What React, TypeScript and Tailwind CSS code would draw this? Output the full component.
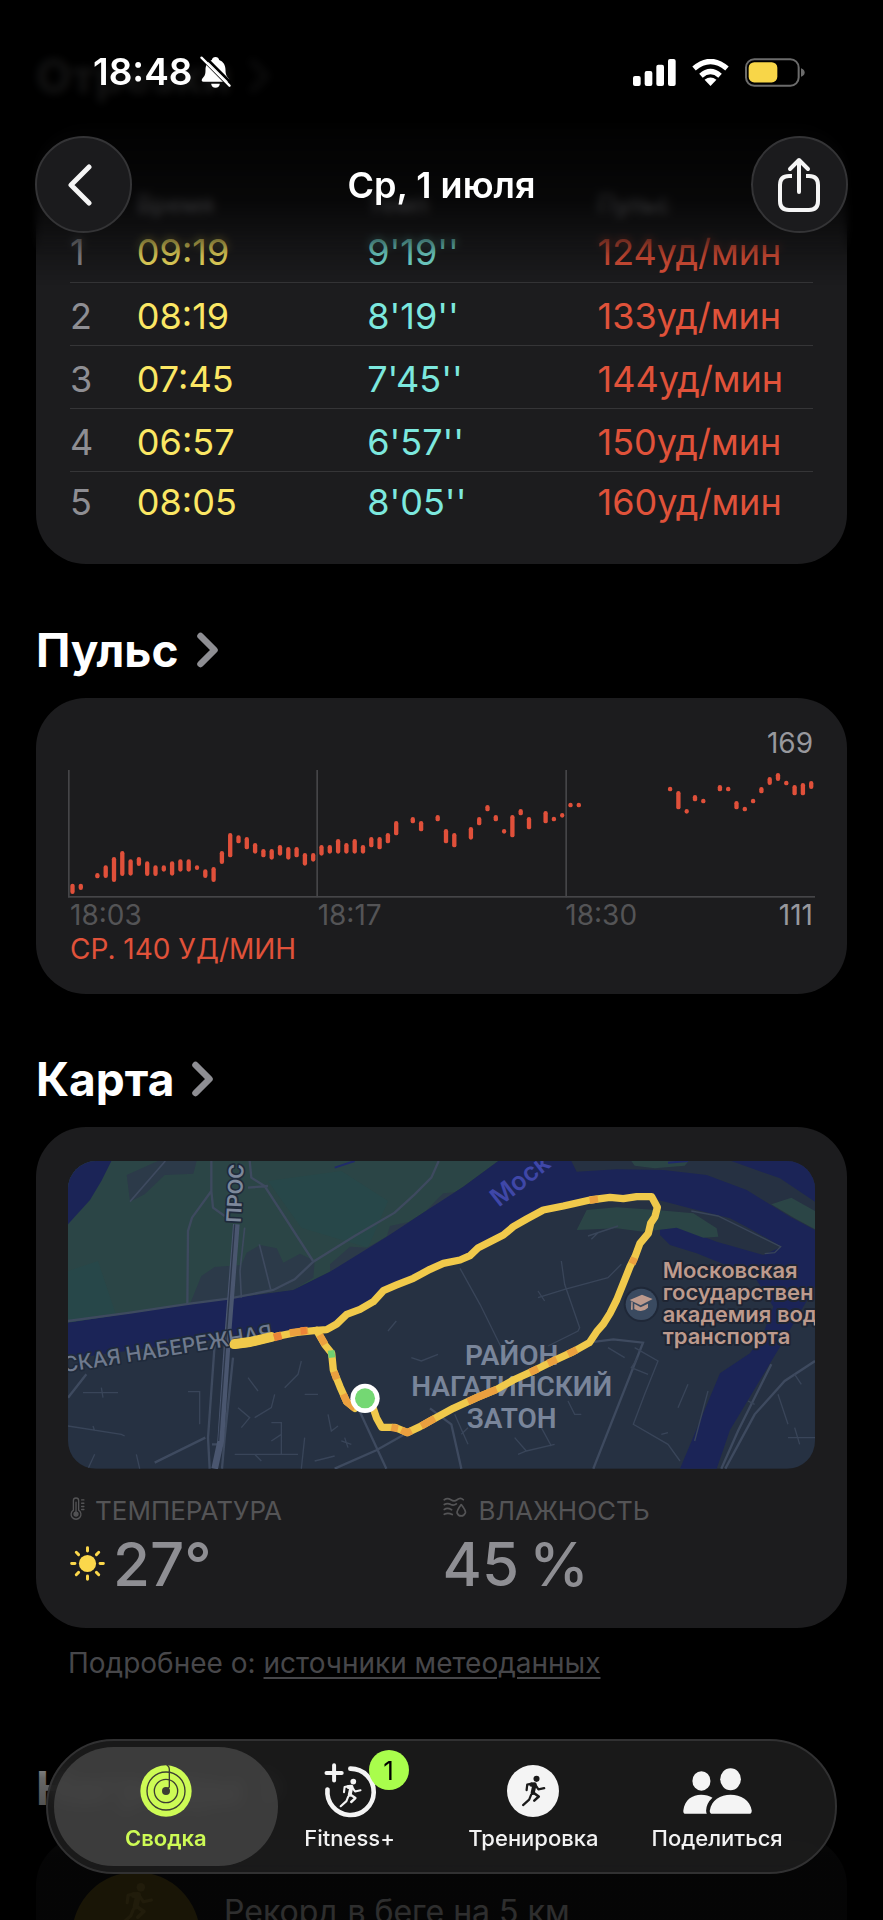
import type { ReactNode } from "react";

type Lap = { n: number; time: string; pace: string; pulse: string };

const laps: Lap[] = [
  { n: 1, time: "09:19", pace: "9'19''", pulse: "124уд/мин" },
  { n: 2, time: "08:19", pace: "8'19''", pulse: "133уд/мин" },
  { n: 3, time: "07:45", pace: "7'45''", pulse: "144уд/мин" },
  { n: 4, time: "06:57", pace: "6'57''", pulse: "150уд/мин" },
  { n: 5, time: "08:05", pace: "8'05''", pulse: "160уд/мин" },
];

// [slot, top, bottom] of every heart rate range on the chart grid
const ranges: [number, number, number][] = [
  [0, 341, 372], [1, 341, 360], [3, 309, 325], [4, 286, 324], [5, 261, 336], [6, 243, 318],
  [7, 268, 317], [8, 261, 288], [9, 274, 318], [10, 286, 318], [11, 286, 305], [12, 274, 317],
  [13, 268, 305], [14, 268, 305], [15, 286, 300], [16, 298, 324], [17, 291, 336], [18, 243, 282],
  [19, 189, 262], [20, 196, 220], [21, 201, 238], [22, 219, 251], [23, 237, 262], [24, 237, 269],
  [25, 225, 257], [26, 231, 269], [27, 231, 262], [28, 249, 287], [29, 249, 275], [30, 225, 257],
  [31, 225, 251], [32, 207, 251], [33, 219, 251], [34, 207, 251], [35, 225, 251], [36, 201, 232],
  [37, 201, 238], [38, 189, 220], [39, 153, 196], [41, 141, 160], [42, 153, 184], [44, 135, 154],
  [45, 177, 220], [46, 189, 232], [48, 171, 209], [49, 141, 166], [50, 105, 124], [51, 135, 154],
  [52, 177, 191], [53, 135, 202], [54, 117, 136], [55, 141, 178], [57, 123, 160], [58, 140, 154],
  [59, 129, 143], [60, 98, 112], [61, 98, 112], [72, 50, 64], [73, 63, 118], [74, 117, 131],
  [75, 75, 94], [76, 86, 100], [78, 45, 64], [79, 50, 64], [80, 93, 118], [81, 110, 124],
  [82, 86, 100], [83, 51, 70], [84, 21, 45], [85, 9, 33], [86, 32, 46], [87, 45, 76],
  [88, 39, 76], [89, 33, 57],
];

function Runner({ className }: { className?: string }) {
  return (
    <svg viewBox="0 0 80 100" className={className} fill="none" stroke="currentColor" strokeLinecap="round" strokeLinejoin="round" aria-hidden="true">
      <circle cx="51" cy="12" r="9.5" fill="currentColor" stroke="none" />
      <path d="M35 30 L45 29 L39 56" strokeWidth="13" />
      <path d="M20 47 L22 30 L36 27" strokeWidth="7" />
      <path d="M48 32 L57 45 L75 41" strokeWidth="7" />
      <path d="M42 56 L58 67 L44 80" strokeWidth="8" />
      <path d="M34 62 L28 77 L9 94" strokeWidth="7" />
    </svg>
  );
}

function Chevron() {
  return (
    <svg viewBox="0 0 22 36" className="h-9 w-[22px]" fill="none" stroke="#8e8e93" strokeWidth="6.5" strokeLinecap="round" strokeLinejoin="round" aria-hidden="true">
      <path d="M3.5 4 L17.5 18 L3.5 32" />
    </svg>
  );
}

function SectionTitle({ children }: { children: ReactNode }) {
  return (
    <h2 className="mb-5 text-[46px] leading-[56px] font-bold">
      <a href="#" className="inline-flex items-center gap-[18px]">
        {children}
        <Chevron />
      </a>
    </h2>
  );
}

function PulseChart() {
  return (
    <svg viewBox="0 0 2241 384" className="block w-full" role="img" aria-label="График пульса">
      <g fill="#454548">
        <rect x="0" y="0" width="5" height="382" />
        <rect x="745" y="0" width="5" height="382" />
        <rect x="1492" y="0" width="5" height="382" />
        <rect x="0" y="378" width="2241" height="5" />
      </g>
      <g fill="#e0503a">
        {ranges.map(([slot, top, bottom]) => (
          <rect key={slot} x={7 + slot * 24.9} y={top} width="13" height={bottom - top} rx="6.5" />
        ))}
      </g>
    </svg>
  );
}

function RouteMap() {
  return (
    <svg viewBox="0 0 2241 923" className="block w-full rounded-[28px]" role="img" aria-label="Карта маршрута">
      <rect width="2241" height="923" fill="#263142" />
      {/* parks */}
      <path fill="#2b4546" d="M0 0 H1291 L1186 77 L1086 142 L956 227 L786 332 L676 387 L486 412 L186 457 L0 485 Z" />
      <path fill="#24494b" opacity=".6" d="M0 330 L90 300 L150 480 L0 485 Z M600 60 L820 30 L960 120 L900 260 L700 200 Z" />
      <path fill="#2c3a49" d="M176 42 L270 0 H386 L376 38 L290 42 L230 100 L186 122 Z" />
      <path fill="#2c3a49" d="M366 429 L400 345 L440 318 L520 312 L536 275 L576 252 L626 262 L646 305 L696 278 L740 300 L736 350 L676 387 L486 412 Z" />
      <path fill="#2c3a49" d="M786 310 L846 257 L896 260 L956 227 L966 195 L1046 178 L1126 97 L1206 90 L1060 180 L886 285 L786 332 Z" />
      {/* water */}
      <g fill="#1b2457">
        <path d="M0 0 H130 L100 60 L66 117 L0 190 Z" />
        <path d="M0 485 L186 457 L366 430 L486 412 L676 387 L786 332 L956 227 L1086 142 L1186 77 L1291 0 H1510 L1526 32 L1646 25 L1786 27 L1916 42 L2036 87 L2166 167 L2241 207 V377 L2206 437 L2136 557 L2046 707 L1986 807 L1946 923 H1836 L1956 637 L2046 577 L2086 517 L2116 437 L2066 357 L1986 317 L1886 277 L1806 252 L1776 222 L1776 202 L1826 197 L1946 242 L2086 282 L2141 257 L2040 200 L1986 172 L1866 142 L1751 112 L1586 117 L1426 147 L1306 227 L1186 302 L1126 307 L946 397 L836 460 L806 480 L756 510 L626 522 L446 535 L136 575 L0 595 Z" />
        <path d="M1990 0 H2241 V122 L2136 52 Z" />
      </g>
      <path fill="#2b4546" d="M1526 207 L1556 147 L1646 139 L1766 147 L1876 157 L1946 202 L1951 227 L1906 230 L1826 200 L1726 212 L1646 202 Z" />
      <path fill="#2b4546" d="M1690 0 H1862 L1850 14 L1760 22 L1700 14 Z M2110 130 L2170 110 L2241 150 V205 L2180 172 Z" />
      <path fill="none" stroke="#202b6b" strokeWidth="6" d="M800 20 L860 0 M1800 5 L1860 0" />
      {/* streets */}
      <g fill="none" stroke="#3e4a5f" strokeWidth="7">
        <path d="M0 480 L186 455 L366 428 L486 412 L616 387 L680 355 L736 302 L860 225 L980 155 L1040 100 L1090 50 L1112 0" />
        <path d="M430 0 V90 L372 170 L360 210 L358 428 M430 90 L435 140 L470 165 M545 0 L550 50 L590 75 L735 300 M600 75 L540 80" />
        <path d="M574 250 L608 385 M292 0 L186 122 M520 410 L516 330 L530 200" strokeWidth="5" />
        <path d="M440 550 L420 830 L425 923 M495 590 L470 830 L462 923 M432 850 H470 M0 710 L55 640" />
        <path d="M412 830 L260 905 M870 740 L955 923 M800 923 L925 868 L1010 820" />
        <path d="M1086 742 L1150 790 L1180 923 M1270 923 M1576 923 L1725 545 L1636 535 L1560 545" />
        <path d="M2241 600 L2150 660 L2060 760 L1972 923 M1960 923 L2010 810 L2110 610" />
      </g>
      <g fill="none" stroke="#394559" strokeWidth="4">
        <path d="M45 695 H150 M100 680 L105 710 M0 795 L160 820 L170 825 M75 795 L80 810 M360 692 H395 V790 M510 740 L545 770 L520 800 M540 650 L570 690 M620 700 L610 740 L560 770 M650 680 L690 640 L700 600" />
        <path d="M610 785 H640 V880 H690 M640 820 L610 840 M500 880 H690 M710 700 H750 M780 760 L790 810 L810 795 M700 923 L710 830 M740 900 L800 885" />
        <path d="M820 840 L850 850 M830 830 L840 860 M1030 590 L1060 600 L1110 580 M960 510 L985 480 M1176 322 L1236 430 L1320 600 M1480 300 L1490 370 L1535 500 L1530 510 L1440 555 M1410 410 L1490 385 L1620 350 L1660 310" />
        <path d="M1410 390 L1430 420 M1560 225 L1650 195 M1570 235 L1590 215 M1870 150 L1950 165 L2138 257 L2120 275 L2090 278 M1620 560 L1670 590 M1700 560 L1770 600 L1730 700 L1696 790 L1800 850 L1836 900" />
        <path d="M1780 820 L1800 815 M1860 670 L1830 740 M1880 840 L1920 690 M2130 700 L2160 790 M2160 830 H2241 M2180 800 L2195 850 M2060 730 L2040 720 M1350 880 L1375 870 L1460 850 M1375 870 L1340 830 M1420 800 L1450 855 M1180 820 L1200 800" />
        <path d="M1710 590 L1690 620 L1740 640 M1500 720 L1520 760 L1540 760 M2180 640 L2200 670 M560 880 L580 900 M60 923 L80 880 M205 880 L215 923 M1160 760 L1200 850" />
      </g>
      <path fill="none" stroke="#4a566f" strokeWidth="20" d="M505 190 L478 540 L458 840 L440 923" />
      <path fill="none" stroke="#2c374a" strokeWidth="4" d="M500 190 L474 540 L452 840" />
      {/* labels under the route */}
      <g fontFamily="Inter, sans-serif" stroke="#1f2a3b" strokeWidth="10" strokeLinejoin="round" paintOrder="stroke">
        <text transform="translate(518 186) rotate(-87)" fontSize="61" fontWeight="600" fill="#7d889b">ПРОС</text>
        <text transform="translate(-12 634) rotate(-9)" fontSize="63" fontWeight="500" fill="#6f7a8e">СКАЯ НАБЕРЕЖНАЯ</text>
        <text transform="translate(1292 140) rotate(-38)" fontSize="76" fontWeight="600" fill="#3f47a8" stroke="none">Моск</text>
      </g>
      <g fontFamily="Roboto, sans-serif" fontWeight="600" fontSize="84" fill="#79859a" textAnchor="middle">
        <text x="1331" y="613">РАЙОН</text>
        <text x="1331" y="706">НАГАТИНСКИЙ</text>
        <text x="1331" y="800">ЗАТОН</text>
      </g>
      {/* route */}
      <g fill="none" strokeLinecap="round" strokeLinejoin="round" strokeWidth="22">
        <path stroke="#f0c94b" d="M496 552 L546 546 L626 526 L686 514 L746 508 L776 506 L806 489 L836 460 L876 445 L916 422 L946 389 L986 372 L1036 352 L1086 325 L1126 307 L1176 297 L1206 284 L1231 260 L1306 222 L1336 197 L1376 174 L1426 147 L1486 135 L1566 117 L1626 109 L1666 113 L1706 107 L1751 107 L1768 139 L1761 167 L1748 187 L1741 217 L1716 247 L1701 287 L1686 317 L1666 367 L1646 417 L1626 457 L1606 489 L1586 512 L1564 545 L1516 572 L1466 595 L1406 625 L1336 657 L1286 685 L1226 710 L1156 742 L1086 780 L1056 797 L1018 815 L981 799 L941 799 L926 772 L914 737" />
        <path stroke="#f0c94b" strokeWidth="30" d="M500 549 L546 543 L610 528" />
        <path stroke="#f0c94b" d="M746 508 L771 552 L791 577 L796 627 L816 677 L836 722 L861 742" />
      </g>
      <g fill="none" strokeLinejoin="round" strokeWidth="22" stroke="#eba03f">
        <path d="M618 528 L640 522 M665 516 L720 508 M755 522 L771 550 M798 632 L806 655 M826 700 L836 722 L861 742" />
        <path d="M1565 118 L1590 114 M1700 290 L1692 308 M1526 566 L1500 579 M1466 595 L1440 607 M1410 623 L1386 634 M1286 685 L1226 710 L1200 722 M1100 772 L1060 795 M1030 809 L1018 815 L1000 807 M990 803 L970 799" />
      </g>
      <path d="M618 530 L640 524 M698 510 L716 508" stroke="#ec8438" strokeWidth="22" />
      <path d="M789 568 L792 590" stroke="#6fd072" strokeWidth="20" />
      <circle cx="891" cy="712" r="44" fill="#ffffff" />
      <circle cx="891" cy="712" r="30" fill="#74d873" />
      {/* point of interest */}
      <circle cx="1720" cy="430" r="53" fill="#1f2838" />
      <circle cx="1720" cy="430" r="47" fill="#3a4a60" />
      <path fill="#bd9a8d" d="M1685 417 L1722 401 L1754 414 L1718 433 Z M1699 428 L1718 439 L1740 428 V440 Q1722 458 1699 444 Z M1690 421 L1694 424 V446 H1689 Z" />
      <g fontFamily="Inter, sans-serif" fontWeight="600" fontSize="66" fill="#bd9a8d" stroke="#1f2533" strokeWidth="12" strokeLinejoin="round" paintOrder="stroke">
        <text x="1784" y="350">Московская</text>
        <text x="1784" y="418">государствен</text>
        <text x="1784" y="483">академия вод</text>
        <text x="1784" y="550">транспорта</text>
      </g>
    </svg>
  );
}

function StatusBar() {
  return (
    <div className="flex h-[72px] items-center justify-between pr-[78px] pl-[93px]">
      <div className="flex items-center gap-2">
        <span className="text-[37px] leading-10 font-semibold">18:48</span>
        <svg viewBox="0 0 92 96" className="h-8 w-[31px]" aria-hidden="true">
          <path fill="#fff" d="M46 3 C52 3 56 7 57 12 C70 17 76 28 76 42 C76 56 80 62 86 68 C89 73 87 77 82 77 H10 C5 77 3 73 6 68 C14 60 16 56 16 42 C16 28 22 17 35 12 C36 7 40 3 46 3 Z M33 83 H59 C59 90 53 95 46 95 C39 95 33 90 33 83 Z" />
          <path d="M-2 0 L84 88 M10 -2 L94 82" stroke="#000" strokeWidth="8" />
          <path d="M4 5 L88 89" stroke="#fff" strokeWidth="7" strokeLinecap="round" />
        </svg>
      </div>
      <div className="flex items-center gap-4">
        <svg viewBox="0 0 129 81" className="h-[27px] w-[43px]" fill="#fff" aria-hidden="true">
          <rect x="0" y="51" width="23" height="30" rx="6" />
          <rect x="35" y="36" width="23" height="45" rx="6" />
          <rect x="70" y="17" width="23" height="64" rx="6" />
          <rect x="105" y="0" width="23" height="81" rx="6" />
        </svg>
        <svg viewBox="0 0 112 82" className="h-[27px] w-[37px]" aria-hidden="true">
          <path fill="none" stroke="#fff" strokeWidth="16" d="M6 29 Q56 -14 106 29 M27 51 Q56 25 85 51" />
          <path fill="#fff" d="M38 63 Q56 50 74 63 L56 82 Z" />
        </svg>
        <svg viewBox="0 0 180 86" className="h-[29px] w-[60px]" aria-hidden="true">
          <rect x="3" y="3" width="158" height="80" rx="25" fill="none" stroke="#6b6b6b" strokeWidth="6" />
          <rect x="11" y="12" width="86" height="61" rx="17" fill="#f8d648" />
          <path d="M168 30 Q179 34 179 43 Q179 52 168 56 Z" fill="#6b6b6b" />
        </svg>
      </div>
    </div>
  );
}

const roundButton = "flex size-[97px] items-center justify-center rounded-full border-2 border-[#343436] bg-[#1b1b1d]";

function Header() {
  return (
    <header className="absolute inset-x-0 top-0 z-10">
      <div className="absolute inset-x-0 top-0 h-[290px] backdrop-blur-xs [mask-image:linear-gradient(to_bottom,black_76%,transparent_88%)]" />
      <div className="absolute inset-x-0 top-0 h-[300px] bg-[linear-gradient(to_bottom,rgba(0,0,0,0.92)_0px,rgba(0,0,0,0.92)_130px,rgba(0,0,0,0.72)_200px,rgba(0,0,0,0.32)_240px,transparent_285px)]" />
      <div className="relative pt-9">
        <StatusBar />
        <div className="mt-7 flex items-center justify-between px-[35px]">
          <button type="button" aria-label="Назад" className={roundButton}>
            <svg viewBox="0 0 26 42" className="mr-2 h-[42px] w-[26px]" fill="none" stroke="#f5f5f5" strokeWidth="5" strokeLinecap="round" strokeLinejoin="round">
              <path d="M22 3 L4 21 L22 39" />
            </svg>
          </button>
          <h1 className="text-4xl font-semibold">Ср, 1 июля</h1>
          <button type="button" aria-label="Поделиться" className={roundButton}>
            <svg viewBox="0 0 44 56" className="mr-0.5 h-14 w-11" fill="none" stroke="#f5f5f5" strokeWidth="4" strokeLinecap="round" strokeLinejoin="round">
              <path d="M15 19 H12 Q3 19 3 28 V44 Q3 53 12 53 H32 Q41 53 41 44 V28 Q41 19 32 19 H29" strokeLinecap="butt" />
              <path d="M22 35 V4 M13 12 L22 3 L31 12" />
            </svg>
          </button>
        </div>
      </div>
    </header>
  );
}

function Tab({ label, active, children }: { label: string; active?: boolean; children: ReactNode }) {
  return (
    <a href="#" aria-current={active ? "page" : undefined} className="relative flex flex-col items-center pt-[23px] pb-5">
      {active && <span className="absolute -inset-x-5 inset-y-1.5 rounded-full bg-[#5a5a5a]/55" />}
      <span className="relative flex h-[54px] items-center">{children}</span>
      <span className={active ? "relative mt-1.5 text-[22px] leading-7 font-semibold text-[#cdfb55]" : "relative mt-1.5 text-[22px] leading-7 font-medium text-[#f2f2f2]"}>{label}</span>
    </a>
  );
}

function TabBar() {
  return (
    <nav aria-label="Разделы" className="absolute inset-x-[46px] bottom-[46px] z-10 grid grid-cols-4 rounded-full border-2 border-[#313132] bg-[#1f1f1f]/80 px-[26px] backdrop-blur-sm">
      <Tab label="Сводка" active>
        <svg viewBox="0 0 156 156" className="size-[52px]" aria-hidden="true">
          <circle cx="78" cy="78" r="77" fill="#cdfb55" />
          <circle cx="78" cy="78" r="57" fill="none" stroke="#3b3d33" strokeWidth="4" />
          <circle cx="78" cy="78" r="35" fill="none" stroke="#3b3d33" strokeWidth="4" />
          <circle cx="78" cy="78" r="12" fill="#3b3d33" />
          <path d="M80 0 Q88 4 88 12 V66 L78 76" fill="none" stroke="#3b3d33" strokeWidth="4" />
        </svg>
      </Tab>
      <Tab label="Fitness+">
        <svg viewBox="0 0 156 160" className="h-[53px] w-[52px] overflow-visible" fill="none" stroke="#f4f4f4" strokeLinecap="round" aria-hidden="true">
          <path d="M79 11 A70 70 0 1 1 10 74" strokeWidth="14" />
          <path d="M30 1 V47 M7 24 H53" strokeWidth="12" />
        </svg>
        <Runner className="absolute top-3.5 left-3.5 h-[30px] w-6 text-[#f4f4f4]" />
        <span className="absolute -top-3.5 left-[45px] flex size-10 items-center justify-center rounded-full bg-[#a9fd4c] text-[26px] text-black">1</span>
      </Tab>
      <Tab label="Тренировка">
        <span className="flex size-[52px] items-center justify-center rounded-full bg-[#f4f4f4] text-[#1a1a1a]">
          <Runner className="h-8 w-[26px]" />
        </span>
      </Tab>
      <Tab label="Поделиться">
        <svg viewBox="0 0 206 136" className="h-[46px] w-[69px]" fill="#f4f4f4" aria-hidden="true">
          <ellipse cx="55" cy="38" rx="27" ry="29" />
          <ellipse cx="142" cy="33" rx="31" ry="33" />
          <path d="M8 136 Q0 136 1 126 C5 94 28 79 54 79 Q74 79 88 88 Q70 104 69 126 Q69 132 71 136 Z" />
          <path d="M88 136 Q79 136 80 126 C84 96 112 79 142 79 C172 79 201 96 205 126 Q206 136 197 136 Z" />
        </svg>
      </Tab>
    </nav>
  );
}

export default function App() {
  return (
    <div className="relative h-screen overflow-hidden bg-black font-[Inter,'Noto_Sans',sans-serif] text-white">
      <Header />
      <main className="px-9 pt-12">
        <section>
          <SectionTitle>Отрезки</SectionTitle>
          <div className="rounded-[50px] bg-[#1c1c1e] px-[34px] pt-[65px] pb-9">
            <table className="w-full table-fixed text-left text-[36px] leading-10">
              <thead className="text-2xl leading-[30px] text-[#8e8e93]">
                <tr>
                  <th className="w-[9%]" />
                  <th className="font-medium">Время</th>
                  <th className="font-medium">Темп</th>
                  <th className="w-[29%] font-medium">Пульс</th>
                </tr>
              </thead>
              <tbody>
                {laps.map((lap) => (
                  <tr key={lap.n} className="h-[63px] border-b border-[#353537] last:h-[57px] last:border-0">
                    <td className="pt-1 text-[#8e8e93]">{lap.n}</td>
                    <td className="pt-1 text-[#fbe764]">{lap.time}</td>
                    <td className="pt-1 text-[#7ce8de]">{lap.pace}</td>
                    <td className="pt-1 whitespace-nowrap text-[#e0523a]">{lap.pulse}</td>
                  </tr>
                ))}
              </tbody>
            </table>
          </div>
        </section>

        <section className="mt-[58px]">
          <SectionTitle>Пульс</SectionTitle>
          <div className="rounded-[50px] bg-[#1c1c1e] px-8 py-7 text-[28px] leading-[34px]">
            <p className="pr-0.5 pb-2.5 text-right text-[#98989d]">169</p>
            <PulseChart />
            <div className="flex pr-0.5 pl-0.5 text-[#545456]">
              <span className="w-1/3">18:03</span>
              <span className="w-1/3">18:17</span>
              <span>18:30</span>
              <span className="ml-auto text-[#98989d]">111</span>
            </div>
            <p className="pl-0.5 text-[#e0523a]">СР. 140 УД/МИН</p>
          </div>
        </section>

        <section className="mt-[57px]">
          <SectionTitle>Карта</SectionTitle>
          <div className="rounded-[50px] bg-[#1c1c1e] px-8 pt-[34px] pb-[34px]">
            <RouteMap />
            <dl className="grid grid-cols-2 pt-[25px] pl-0.5">
              <div>
                <dt className="flex items-center gap-2.5 text-[26px] leading-[34px] text-[#545456]">
                  <svg viewBox="0 0 45 70" className="mb-1 h-[23px] w-[15px]" fill="none" stroke="currentColor" strokeWidth="4" strokeLinecap="round" aria-hidden="true">
                    <path d="M10 40 V11 Q10 3 18 3 Q26 3 26 11 V40 A15 15 0 1 1 10 40 Z" />
                    <circle cx="18" cy="52" r="6" fill="currentColor" />
                    <path d="M18 16 V48 M35 9 H42 M35 19 H42 M35 29 H42 M35 38 H42" />
                  </svg>
                  ТЕМПЕРАТУРА
                </dt>
                <dd className="mt-1.5 flex items-center gap-2 text-6xl leading-[60px] font-medium text-[#8e8e93]">
                  <svg viewBox="0 0 106 106" className="size-[35px]" stroke="#fbd74b" strokeWidth="9" strokeLinecap="round" aria-hidden="true">
                    <circle cx="53" cy="53" r="26" fill="#fbd74b" stroke="none" />
                    <path d="M53 5 V15 M53 91 V101 M5 53 H15 M91 53 H101 M19 19 L26 26 M80 80 L87 87 M19 87 L26 80 M80 26 L87 19" />
                  </svg>
                  27°
                </dd>
              </div>
              <div>
                <dt className="flex items-center gap-3 text-[26px] leading-[34px] text-[#545456]">
                  <svg viewBox="0 0 68 58" className="mb-2 h-5 w-6" fill="none" stroke="currentColor" strokeWidth="5" strokeLinecap="round" strokeLinejoin="round" aria-hidden="true">
                    <path d="M3 8 Q12 2 22 8 T40 8 Q50 0 58 8 M3 22 Q12 16 22 22 Q30 26 38 20 M3 36 Q12 30 24 37 M3 50 Q14 44 26 51" />
                    <path d="M52 22 Q66 40 64 46 Q60 55 52 55 Q43 55 40 46 Q39 40 52 22 Z" />
                  </svg>
                  ВЛАЖНОСТЬ
                </dt>
                <dd className="mt-1.5 text-6xl leading-[60px] font-medium text-[#8e8e93]">45&#8201;%</dd>
              </div>
            </dl>
          </div>
          <p className="mt-[18px] pl-8 text-[28px] leading-[34px] text-[#47474a]">
            Подробнее о:{" "}
            <a href="#" className="underline decoration-2 underline-offset-4">источники метеоданных</a>
          </p>
        </section>

        <section className="mt-20">
          <SectionTitle>Награды</SectionTitle>
          <div className="flex items-start gap-6 rounded-[50px] bg-[#1c1c1e] px-9 pt-9 pb-9">
            <span className="flex size-32 shrink-0 items-start justify-center rounded-full bg-[#8a7420] pt-2.5 text-[#b59a3c]">
              <Runner className="h-11 w-9" />
            </span>
            <span className="pt-4 text-[32px] leading-12">Рекорд в беге на 5 км</span>
          </div>
        </section>
      </main>
      <div className="absolute inset-x-0 bottom-0 h-48 bg-[linear-gradient(to_bottom,transparent_0px,rgba(0,0,0,0.6)_50px,rgba(0,0,0,0.82)_130px,rgba(0,0,0,0.82)_192px)]" />
      <TabBar />
    </div>
  );
}
